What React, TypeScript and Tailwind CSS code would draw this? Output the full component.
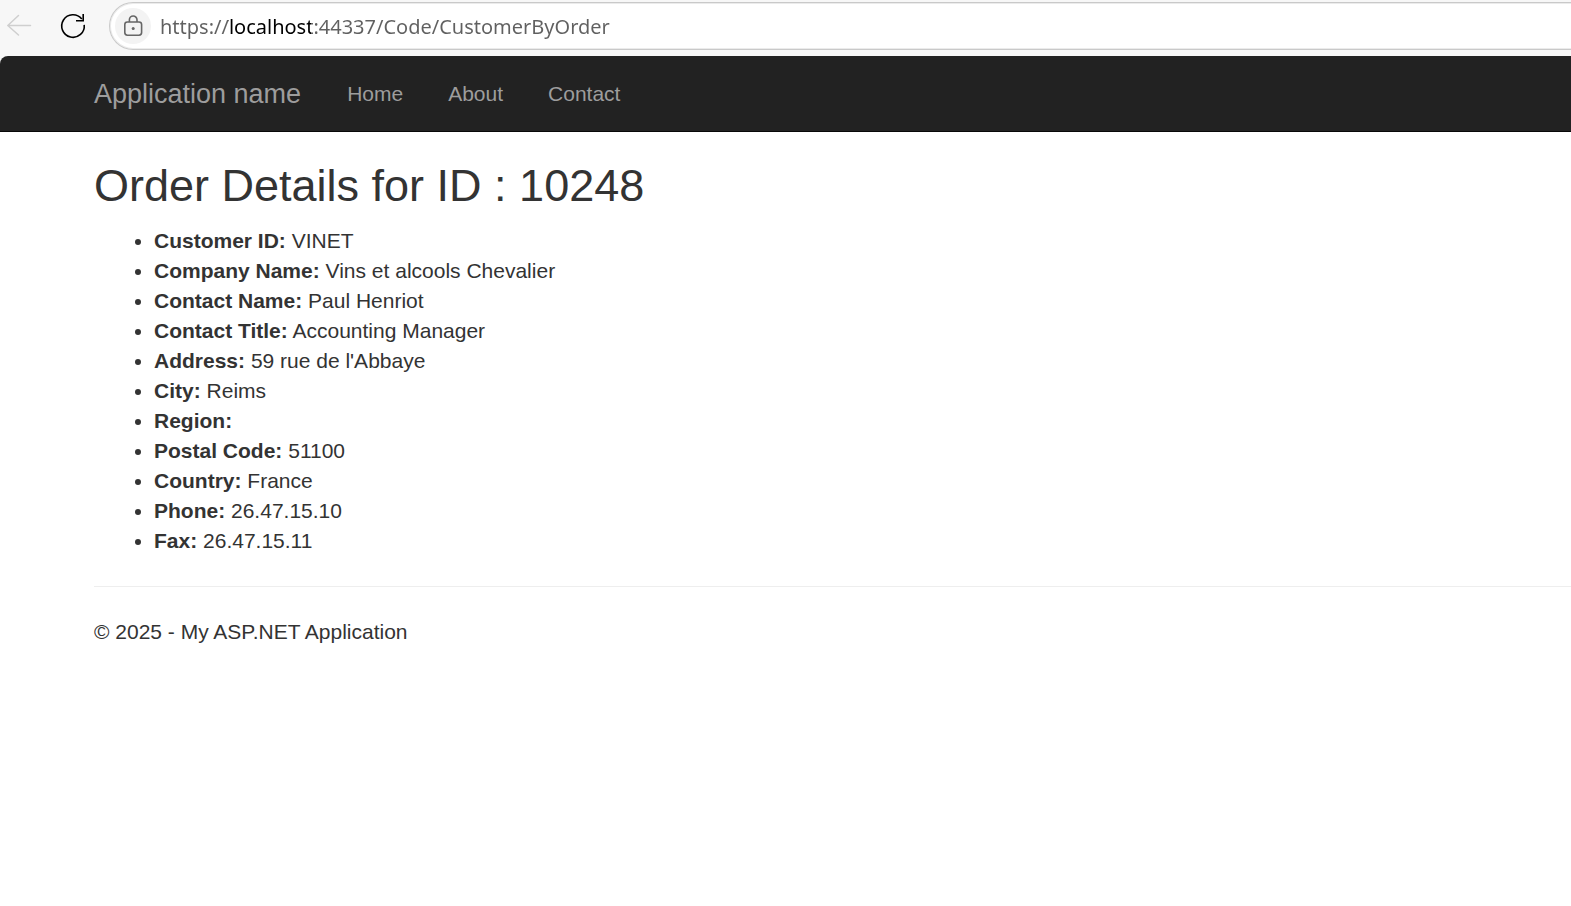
type Detail = { label: string; value: string };

const details: Detail[] = [
  { label: "Customer ID", value: "VINET" },
  { label: "Company Name", value: "Vins et alcools Chevalier" },
  { label: "Contact Name", value: "Paul Henriot" },
  { label: "Contact Title", value: "Accounting Manager" },
  { label: "Address", value: "59 rue de l'Abbaye" },
  { label: "City", value: "Reims" },
  { label: "Region", value: "" },
  { label: "Postal Code", value: "51100" },
  { label: "Country", value: "France" },
  { label: "Phone", value: "26.47.15.10" },
  { label: "Fax", value: "26.47.15.11" },
];

const links = ["Home", "About", "Contact"];

function BrowserBar() {
  return (
    <div className="flex h-14 items-start overflow-hidden bg-[#f7f7f7] pt-0.5">
      <button type="button" aria-label="Back" disabled className="ml-1.5 mt-2.5 size-7">
        <svg viewBox="0 0 28 28" className="size-7" fill="none" stroke="#cfcfcf" strokeWidth="1.5" strokeLinecap="round" strokeLinejoin="round">
          <path d="M24.5 13.5H2M12.5 3.5L1.8 13.5L12.5 23" />
        </svg>
      </button>
      <button type="button" aria-label="Refresh" className="ml-[25px] mt-2.5 size-7">
        <svg viewBox="0 0 28 28" className="size-7" fill="none" stroke="#000" strokeWidth="1.6">
          <path d="M25.2 12.8A11.26 11.26 0 1 1 22.8 7" />
          <path d="M24.2 2V8.8H17" />
        </svg>
      </button>
      <div className="-mr-1 ml-[22px] flex h-12 flex-1 items-center rounded-l-full border-y border-l border-[#c9c9c9] bg-white pl-[5px] ring-1 ring-inset ring-[#ebebeb]">
        <button type="button" aria-label="View site information" className="flex size-9 items-center justify-center rounded-full bg-[#f3f3f3]">
          <svg viewBox="0 0 20 22" className="h-[22px] w-5" fill="none" stroke="#666" strokeWidth="1.6">
            <rect x="1.8" y="7" width="16.8" height="13.2" rx="2.6" />
            <path d="M6.4 7V4.8a3.8 3.8 0 0 1 7.6 0V7" />
            <circle cx="10.2" cy="13.6" r="1.5" fill="#666" stroke="none" />
          </svg>
        </button>
        <input
          type="text"
          aria-label="Address and search bar"
          defaultValue="https://localhost:44337/Code/CustomerByOrder"
          className="ml-[9px] h-10 min-w-0 flex-1 bg-[linear-gradient(90deg,#606060_68px,#000_68px,#000_151px,#606060_151px)] bg-clip-text font-['Noto_Sans',sans-serif] text-[20px] text-transparent outline-none"
        />
      </div>
    </div>
  );
}

export default function App() {
  return (
    <div className="min-h-screen bg-white font-['Liberation_Sans',Arial,sans-serif] text-[21px] leading-[30px] text-[#333]">
      <BrowserBar />
      <div className="bg-[#f7f7f7]">
        <nav className="flex h-[76px] items-center rounded-tl-lg border-b border-[#080808] bg-[#222] pl-[94px] text-[#9d9d9d]">
          <a href="#" className="text-[27px]">Application name</a>
          <ul className="ml-6 flex gap-px">
            {links.map((link) => (
              <li key={link}>
                <a href="#" className="block px-[22px]">{link}</a>
              </li>
            ))}
          </ul>
        </nav>
      </div>
      <main className="pl-[94px] pt-[29px]">
        <h2 className="text-[45px] leading-[50px]">Order Details for ID : 10248</h2>
        <ul className="mt-[15px] list-disc pl-[60px]">
          {details.map(({ label, value }) => (
            <li key={label}>
              <strong>{label}:</strong> {value}
            </li>
          ))}
        </ul>
        <hr className="my-[30px] border-[#eee]" />
        <footer>
          <p>© 2025 - My ASP.NET Application</p>
        </footer>
      </main>
    </div>
  );
}
